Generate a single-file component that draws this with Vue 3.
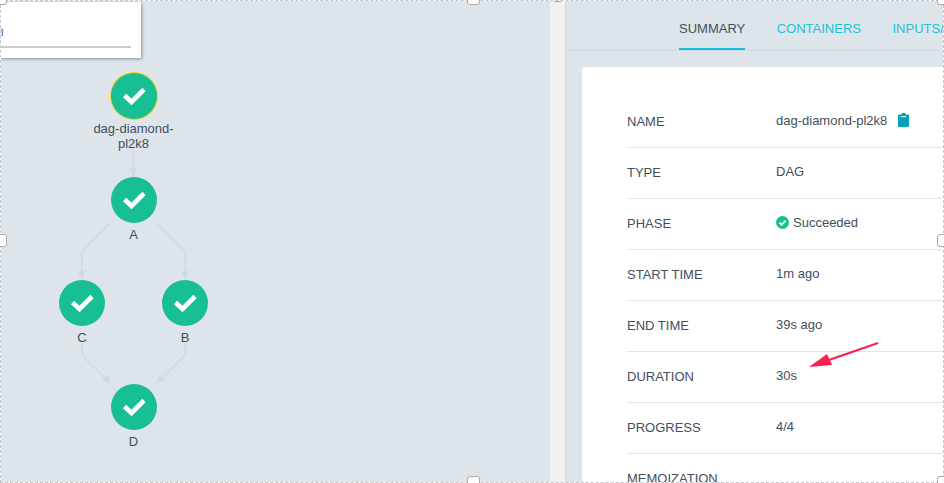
<template>
  <div class="page">
    <div class="graph-pane">
      <svg class="edges" width="550" height="483" viewBox="0 0 550 483">
        <g v-for="edge in edges" :key="edge.id">
          <polyline :points="edge.line" class="edge-line" />
          <polygon :points="edge.head" class="edge-head" />
        </g>
      </svg>
      <div
        v-for="node in nodes"
        :key="node.id"
        class="node"
        :style="{ left: node.x + 'px', top: node.y + 'px' }"
      >
        <div class="node-circle" :class="{ selected: node.selected }">
          <svg width="46" height="46" viewBox="0 0 46 46">
            <polyline points="13.5,22.5 20.5,29 33,16.5" class="node-check" />
          </svg>
        </div>
        <div class="node-label" :class="{ selected: node.selected }">{{ node.label }}</div>
      </div>
      <div class="search-box">
        <span class="search-text">n</span>
        <div class="search-line"></div>
      </div>
    </div>

    <div class="divider">
      <div class="divider-tick"></div>
    </div>

    <div class="details-pane">
      <div class="tabs">
        <div v-for="tab in tabs" :key="tab" class="tab" :class="{ active: tab === 'SUMMARY' }">{{ tab }}</div>
      </div>
      <div class="card">
        <div v-for="row in rows" :key="row.label" class="row">
          <div class="row-label">{{ row.label }}</div>
          <div class="row-value">
            <svg v-if="row.status" class="status-icon" width="13" height="13" viewBox="0 0 13 13">
              <circle cx="6.5" cy="6.5" r="6.5" fill="#18be94" />
              <polyline points="3.4,6.6 5.6,8.7 9.7,4.6" fill="none" stroke="#fff" stroke-width="1.7" />
            </svg>
            <span>{{ row.value }}</span>
            <svg v-if="row.copy" class="copy-icon" width="11" height="14" viewBox="0 0 11 14">
              <path d="M1.2 1.6H3.5V0.8Q3.5 0 4.3 0H6.7Q7.5 0 7.5 0.8V1.6H9.8Q11 1.6 11 2.8V12.8Q11 14 9.8 14H1.2Q0 14 0 12.8V2.8Q0 1.6 1.2 1.6Z" fill="#00a2b8" />
              <rect x="2.8" y="3.2" width="5.4" height="1" fill="#fff" />
            </svg>
          </div>
        </div>
      </div>
    </div>

    <svg class="arrow" width="944" height="483" viewBox="0 0 944 483">
      <line x1="878" y1="343" x2="826" y2="361" stroke="#f9214f" stroke-width="2.2" />
      <polygon points="809,367 827,354 832,365" fill="#f9214f" />
    </svg>

    <div class="frame"></div>
    <div v-for="h in handles" :key="h" class="handle" :class="h"></div>
  </div>
</template>

<script setup>
const nodes = [
  { id: 'root', label: 'dag-diamond-pl2k8', x: 133.5, y: 73, selected: true },
  { id: 'a', label: 'A', x: 133.5, y: 177 },
  { id: 'c', label: 'C', x: 82, y: 280 },
  { id: 'b', label: 'B', x: 185, y: 280 },
  { id: 'd', label: 'D', x: 133.5, y: 384 }
]

const edges = [
  { id: 'root-a', line: '133.5,147 133.5,170', head: '129.5,168 137.5,168 133.5,177' },
  { id: 'a-c', line: '110.5,222.5 81.7,251.7 81.7,274', head: '77.7,271 85.7,271 81.7,280' },
  { id: 'a-b', line: '156.5,222.5 185.2,251.7 185.2,274', head: '181.2,271 189.2,271 185.2,280' },
  { id: 'c-d', line: '81.7,343 81.7,355 106,379', head: '101.5,380 107.5,374 111,384' },
  { id: 'b-d', line: '185.2,343 185.2,355 161,379', head: '165.5,380 159.5,374 156,384' }
]

const tabs = ['SUMMARY', 'CONTAINERS', 'INPUTS/OUTPUTS']

const rows = [
  { label: 'NAME', value: 'dag-diamond-pl2k8', copy: true },
  { label: 'TYPE', value: 'DAG' },
  { label: 'PHASE', value: 'Succeeded', status: true },
  { label: 'START TIME', value: '1m ago' },
  { label: 'END TIME', value: '39s ago' },
  { label: 'DURATION', value: '30s' },
  { label: 'PROGRESS', value: '4/4' },
  { label: 'MEMOIZATION', value: '' }
]

const handles = ['top-left', 'top-mid', 'top-right', 'mid-left', 'mid-right', 'bottom-mid', 'bottom-right']
</script>

<style>
html,
body {
  margin: 0;
  overflow: hidden;
  background: #fff;
}
</style>

<style scoped>
.page {
  position: relative;
  display: flex;
  width: 944px;
  height: 483px;
  overflow: hidden;
  font-family: "Liberation Sans", Arial, sans-serif;
  font-size: 13px;
  color: #434f5c;
  background: #dee5ea;
}

.graph-pane {
  position: relative;
  flex: 0 0 550px;
  height: 483px;
}

.edges {
  position: absolute;
  left: 0;
  top: 0;
}

.edge-line {
  fill: none;
  stroke: #d1d9e0;
  stroke-width: 1.5;
}

.edge-head {
  fill: #d1d9e0;
}

.node {
  position: absolute;
  width: 90px;
  margin-left: -45px;
  display: flex;
  flex-direction: column;
  align-items: center;
}

.node-circle {
  width: 46px;
  height: 46px;
  border-radius: 50%;
  background: #18be94;
}

.node-circle.selected {
  box-shadow: 0 0 0 1px #f2d32b;
}

.node-check {
  fill: none;
  stroke: #fff;
  stroke-width: 4.6;
}

.node-label {
  margin-top: 4px;
  width: 84px;
  text-align: center;
  line-height: 15px;
}

.node-label.selected {
  margin-top: 2px;
}

.search-box {
  position: absolute;
  left: 0;
  top: 2px;
  width: 141px;
  height: 56px;
  background: #fff;
  box-shadow: 1px 1px 3px rgba(90, 110, 130, 0.7);
  overflow: hidden;
}

.search-text {
  position: absolute;
  left: -4px;
  top: 21px;
  font-size: 14px;
  color: #5a7fa8;
}

.search-line {
  position: absolute;
  left: 0;
  top: 44px;
  width: 131px;
  height: 2px;
  background: #ccc;
}

.divider {
  position: relative;
  flex: 0 0 16px;
  box-sizing: border-box;
  background: #f1f1f1;
  border-right: 1px solid #d5dbe2;
}

.divider-tick {
  position: absolute;
  left: 4px;
  top: 0;
  width: 7px;
  height: 2px;
  background: #a9a9a9;
}

.details-pane {
  flex: 0 0 378px;
  overflow: hidden;
}

.tabs {
  display: flex;
  gap: 31.5px;
  height: 50px;
  padding-left: 113px;
  border-bottom: 1px solid #d1d9e0;
  white-space: nowrap;
}

.tab {
  height: 48px;
  line-height: 57px;
  color: #20c1d8;
}

.tab.active {
  color: #434f5c;
  border-bottom: 2px solid #18bed8;
}

.card {
  width: 420px;
  margin: 16px 0 0 16px;
  padding: 30px 0 0 45px;
  box-sizing: border-box;
  background: #fff;
  border-radius: 4px;
}

.row {
  display: flex;
  align-items: center;
  height: 51px;
  padding-bottom: 2px;
  box-sizing: border-box;
  border-bottom: 1px solid #dee5ea;
}

.row-label {
  flex: 0 0 149px;
}

.row-value {
  display: flex;
  align-items: center;
  margin-top: -2px;
}

.status-icon {
  margin-right: 4px;
}

.copy-icon {
  margin-left: 11px;
}

.arrow {
  position: absolute;
  left: 0;
  top: 0;
  pointer-events: none;
}

.frame {
  position: absolute;
  inset: 0;
  box-sizing: border-box;
  border: 1px solid #fff;
  pointer-events: none;
}

.frame::after {
  content: "";
  position: absolute;
  inset: -1px;
  border: 1px dashed #c3c8ce;
}

.handle {
  position: absolute;
  box-sizing: border-box;
  width: 13px;
  height: 13px;
  background: #fff;
  border: 1px solid #aaa;
  border-radius: 3px;
}

.top-left {
  left: -6px;
  top: -8px;
}

.top-mid {
  left: 467px;
  top: -8px;
}

.top-right {
  left: 937px;
  top: -8px;
}

.mid-left {
  left: -6px;
  top: 234px;
}

.mid-right {
  left: 937px;
  top: 234px;
}

.bottom-mid {
  left: 467px;
  top: 476px;
}

.bottom-right {
  left: 937px;
  top: 476px;
}
</style>
